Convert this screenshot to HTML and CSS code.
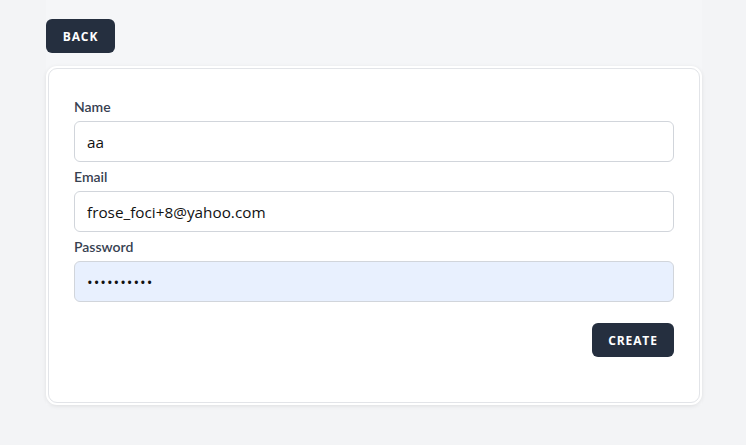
FILE: index.html
```html
<!DOCTYPE html>
<html>
<head>
<meta charset="utf-8">
<link rel="stylesheet" href="styles.css">
</head>
<body>
<div class="page">
  <div class="wrap">
    <button class="btn back">BACK</button>
    <form class="card">
      <div class="field">
        <label class="label">Name</label>
        <input class="input" type="text" value="aa">
      </div>
      <div class="field">
        <label class="label">Email</label>
        <input class="input" type="text" value="frose_foci+8@yahoo.com">
      </div>
      <div class="field">
        <label class="label">Password</label>
        <input class="input filled" type="password" value="abcdefghij">
      </div>
      <div class="actions">
        <button class="btn create" type="button">CREATE</button>
      </div>
    </form>
  </div>
</div>
</body>
</html>
```

FILE: styles.css
```css
html, body {
  margin: 0;
  padding: 0;
  background: #f3f4f6;
  height: 100%;
}
.page {
  padding: 0 44px 0 46px;
  min-height: 445px;
}
.wrap {
  background: #f5f6f8;
  padding: 19px 0 0;
  display: flex;
  flex-direction: column;
  align-items: flex-start;
}
.btn {
  background: #252f3f;
  color: #fff;
  border: none;
  border-radius: 6px;
  font-family: "Open Sans", sans-serif;
  font-weight: 700;
  font-size: 12px;
  letter-spacing: 0.9px;
  cursor: pointer;
}
.back {
  width: 69px;
  height: 34px;
  padding: 0;
}
.card {
  margin: 15px 2px 2px;
  box-sizing: border-box;
  width: 652px;
  background: #fff;
  border: 1px solid #e2e4e8;
  border-radius: 9px;
  box-shadow: 0 0 0 2px #fff, 0 1px 4px 2px rgba(0,0,0,0.09);
  padding: 29px 25px 45px;
  display: flex;
  flex-direction: column;
}
.field {
  display: flex;
  flex-direction: column;
  margin-bottom: 6px;
}
.label {
  font-family: Lato, sans-serif;
  font-weight: 600;
  font-size: 14px;
  color: #374151;
  line-height: 17px;
  margin-bottom: 6px;
}
.input {
  box-sizing: border-box;
  height: 41px;
  width: 100%;
  border: 1px solid #d1d5db;
  border-radius: 6px;
  padding: 0 12px;
  font-family: "Open Sans", sans-serif;
  font-size: 15.3px;
  color: #111;
  background: #fff;
  outline: none;
}
.input.filled {
  background: #e8f0fe;
  font-size: 15px;
  letter-spacing: 1px;
}
.actions {
  display: flex;
  justify-content: flex-end;
  margin-top: 15px;
}
.create {
  width: 82px;
  height: 34px;
  padding: 0;
}
```
